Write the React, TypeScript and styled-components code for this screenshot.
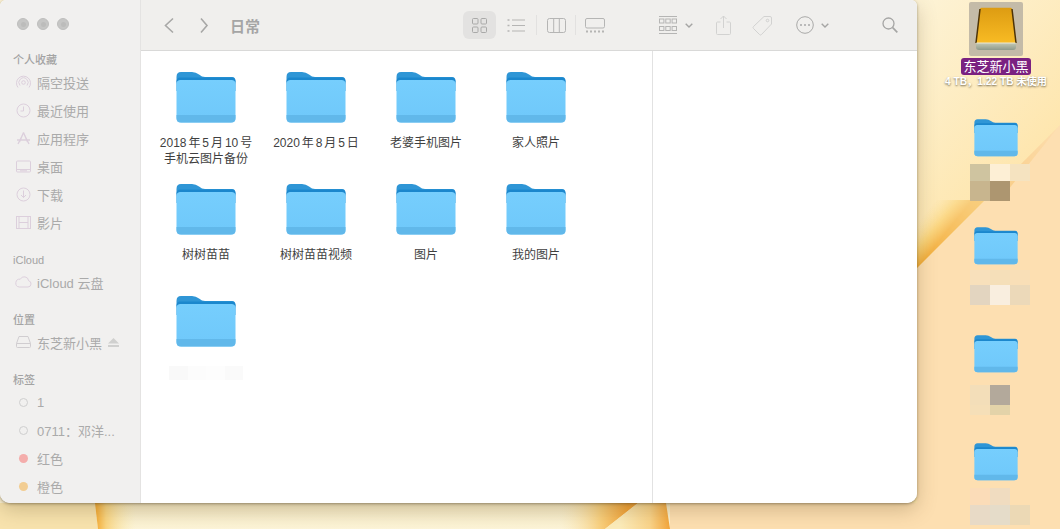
import React from 'react';
import styled, { createGlobalStyle } from 'styled-components';

const Global = createGlobalStyle`
  html, body { margin: 0; padding: 0; width: 1060px; height: 529px; overflow: hidden; }
  body { font-family: "Liberation Sans", "Noto Sans CJK SC", sans-serif; }
`;

const Desktop = styled.div`
  position: relative; width: 1060px; height: 529px; overflow: hidden; display: flex; align-items: flex-start;
`;
const Wallpaper = styled.svg`
  position: absolute; inset: 0; width: 1060px; height: 529px;
`;
const Win = styled.div`
  position: relative; width: 917px; height: 503px; display: flex; flex: none; overflow: hidden;
  background: #fff; border-radius: 6px 6px 10px 10px;
  box-shadow: 0 7px 20px rgba(90, 70, 30, .26), 0 1px 3px rgba(60, 50, 30, .45);
`;
const Sidebar = styled.aside`
  width: 140px; flex: none; background: #f1f0ef; border-right: 1px solid #e4e3e2; display: flex; flex-direction: column;
  padding-top: 18px; box-sizing: content-box;
`;
const Lights = styled.div`
  display: flex; gap: 8px; padding-left: 17px; height: 12px; margin-bottom: 23px;
`;
const Light = styled.span`
  width: 12px; height: 12px; border-radius: 50%; background: #c6c6c5; border: 1px solid #bfbfbe; box-sizing: border-box;
  display: flex; align-items: center; justify-content: center;
  &::after { content: ""; width: 5px; height: 5px; border-radius: 50%; background: #bcbcbb; }
`;
const SectionHead = styled.div<{ $top: number }>`
  font-size: 11px; line-height: 14px; color: #a3a3a3; font-weight: 500; padding-left: 13px; margin-top: ${p => p.$top}px; margin-bottom: 1px; height: 14px;
`;
const NavItem = styled.div`
  height: 28px; display: flex; align-items: center; font-size: 13px; color: #aaaaaa; white-space: nowrap;
`;
const NavIcon = styled.span`
  width: 37px; flex: none; display: flex; justify-content: center; padding-left: 9px; box-sizing: border-box;
  svg { display: block; flex: none; }
`;
const Dot = styled.span<{ $c: string }>`
  width: 9px; height: 9px; border-radius: 50%; background: ${p => p.$c}; display: block; flex: none;
`;
const Ring = styled.span`
  width: 9px; height: 9px; border-radius: 50%; border: 1px solid #cfcfcf; box-sizing: border-box; display: block; flex: none;
`;
const Eject = styled.span`
  margin-left: 6px; display: flex;
`;
const Main = styled.main`
  flex: 1; min-width: 0; display: flex; flex-direction: column;
`;
const Toolbar = styled.header`
  height: 50px; flex: none; background: #f0efed; border-bottom: 1px solid #d9d9d8; display: flex; align-items: center; position: relative;
`;
const Tool = styled.span<{ $l: number }>`
  margin-left: ${p => p.$l}px; display: flex; flex: none; align-items: center; justify-content: center;
  svg { display: block; }
`;
const Selected = styled.span<{ $l: number }>`
  margin-left: ${p => p.$l}px; width: 33px; height: 28px; border-radius: 6px; background: #e3e2e1; display: flex; flex: none; align-items: center; justify-content: center;
  svg { display: block; }
`;
const Sep = styled.span<{ $l: number }>`
  margin-left: ${p => p.$l}px; width: 1px; height: 20px; background: #e2e1e0; flex: none;
`;
const Title = styled.span`
  margin-left: 21px; width: 46px; font-size: 15px; font-weight: 700; color: #a5a5a5; flex: none; letter-spacing: 0;
`;
const Body = styled.div`
  flex: 1; min-height: 0; display: flex;
`;
const Files = styled.div`
  width: 511px; flex: none; display: grid; grid-template-columns: repeat(4, 110px); grid-auto-rows: 112px; padding: 20px 0 0 10px; box-sizing: border-box; align-content: start;
`;
const FileItem = styled.div`
  display: flex; flex-direction: column; align-items: center;
`;
const FileIcon = styled.div`
  height: 52px; margin-bottom: 12px; svg { display: block; }
`;
const FileLabel = styled.div`
  width: 106px; text-align: center; font-size: 12px; line-height: 16px; color: #3f3f3f; word-spacing: -1.4px;
`;
const BlurLabel = styled.div`
  width: 74px; height: 14px; margin-top: 7px; display: flex; filter: blur(.5px);
`;
const BlurCell = styled.span<{ $c: string }>`
  flex: 1; background: ${p => p.$c};
`;
const Preview = styled.div`
  flex: 1; border-left: 1px solid #e2e2e2; background: #fff;
`;
const IconColumn = styled.section`
  position: relative; width: 128px; margin-left: 15px; flex: none; display: flex; flex-direction: column; align-items: center;
`;
const DriveBox = styled.div`
  margin-top: 2px; width: 54px; height: 54px; background: #c4bba8; border-radius: 2px; display: flex; align-items: center; justify-content: center;
`;
const DriveName = styled.div`
  margin-top: 2px; height: 17px; line-height: 17px; padding: 0 2px; border-radius: 3px; background: #7a2181; color: #fff; font-size: 13px; white-space: nowrap;
`;
const DriveInfo = styled.div`
  height: 13px; line-height: 13px; margin-top: 0; margin-bottom: 30px; font-size: 10.2px; color: #fff; font-weight: 700; white-space: nowrap;
  text-shadow: 0 1px 2px rgba(70, 60, 40, .75);
`;
const DeskEntry = styled.div`
  height: 108px; display: flex; flex-direction: column; align-items: center; flex: none; width: 100%;
`;
const Mosaic = styled.div<{ $top: number }>`
  margin-top: ${p => p.$top}px; margin-left: 8px; display: grid; grid-template-columns: repeat(3, 20px);
  filter: blur(.4px);
`;
const Tile = styled.span<{ $c: string; $h: number }>`
  height: ${p => p.$h}px; background: ${p => p.$c};
`;

const Folder = ({ w = 60, h = 52 }: { w?: number; h?: number }) => (
  <svg width={w} height={h} viewBox="0 0 60 52">
    <defs>
      <linearGradient id="fb" x1="0" y1="0" x2="0" y2="1">
        <stop offset="0" stopColor="#76cefd" />
        <stop offset="1" stopColor="#6fc8fa" />
      </linearGradient>
    </defs>
    <path d="M.5 6 Q.5 1 5 1 H16 Q20 1 23 3.5 Q26 6 29 6 H56 Q59.5 6 59.5 10 V20 H.5 Z" fill="#2f96d6" />
    <path d="M.5 13 Q.5 9 4 9 H56 Q59.5 9 59.5 13 V47 Q59.5 51.5 55 51.5 H5 Q.5 51.5 .5 47 Z" fill="url(#fb)" />
    <path d="M.5 44 H59.5 V47 Q59.5 51.5 55 51.5 H5 Q.5 51.5 .5 47 Z" fill="#61b8ea" />
    <path d="M.5 11 Q.5 6.5 4 6.5 H56 Q59.5 6.5 59.5 11 V13 Q59.5 9 56 9 H4 Q.5 9 .5 13 Z" fill="#1b87cd" />
  </svg>
);

const NavA = { fill: 'none', stroke: '#dccfdc', strokeWidth: 1 } as const;

const AirDrop = () => (
  <svg width="15" height="15" viewBox="0 0 15 15" {...NavA}>
    <circle cx="7.5" cy="7.5" r="1.8" /><path d="M4 10.5a4.6 4.6 0 1 1 7 0M2 12.5a7 7 0 1 1 11 0" />
  </svg>
);
const Clock = () => (
  <svg width="15" height="15" viewBox="0 0 15 15" {...NavA}>
    <circle cx="7.5" cy="7.5" r="6.5" /><path d="M7.5 3.5v4.5h-3" />
  </svg>
);
const Apps = () => (
  <svg width="15" height="15" viewBox="0 0 15 15" {...NavA} strokeWidth={1.3}>
    <path d="M7.5 1.5 3.5 11M7.5 1.5 11.5 11M1 9h13M6 5l-4 8M9 5l4 8" />
  </svg>
);
const Screen = () => (
  <svg width="15" height="13" viewBox="0 0 15 13" {...NavA}>
    <rect x=".5" y="1" width="14" height="11" rx="1" /><path d="M.5 9.5h14M4 10.8h7" />
  </svg>
);
const Down = () => (
  <svg width="15" height="15" viewBox="0 0 15 15" {...NavA}>
    <circle cx="7.5" cy="7.5" r="6.5" /><path d="M7.5 3.5v7M5 8l2.5 2.5L10 8" />
  </svg>
);
const Film = () => (
  <svg width="15" height="13" viewBox="0 0 15 13" {...NavA}>
    <rect x=".5" y=".5" width="14" height="12" /><path d="M3 .5v12M12 .5v12M3 6.5h9" />
  </svg>
);
const Cloud = () => (
  <svg width="17" height="12" viewBox="0 0 17 12" {...NavA}>
    <path d="M4.2 11h8.8a3.2 3.2 0 0 0 .6-6.3A4.4 4.4 0 0 0 5.3 3.2 3.9 3.9 0 0 0 4.2 11Z" />
  </svg>
);
const DriveSmall = () => (
  <svg width="15" height="12" viewBox="0 0 15 12" fill="none" stroke="#d0cdd0">
    <path d="M3 .5h9l2.5 7v3a1 1 0 0 1-1 1h-12a1 1 0 0 1-1-1v-3ZM.5 7.5h14" />
  </svg>
);

const C = '#b5b5b4';
const Back = () => <svg width="12" height="17" viewBox="0 0 12 17" fill="none" stroke="#a8a8a7" strokeWidth="1.6"><path d="M10 1.5 2.5 8.5 10 15.5" /></svg>;
const Fwd = () => <svg width="10" height="17" viewBox="0 0 10 17" fill="none" stroke="#a8a8a7" strokeWidth="1.6"><path d="M2 1.5 8 8.5 2 15.5" /></svg>;
const GridIc = () => (
  <svg width="15" height="15" viewBox="0 0 15 15" fill="none" stroke="#a9a9a8">
    <rect x=".5" y=".5" width="5.5" height="5.5" rx="1" /><rect x="9" y=".5" width="5.5" height="5.5" rx="1" />
    <rect x=".5" y="9" width="5.5" height="5.5" rx="1" /><rect x="9" y="9" width="5.5" height="5.5" rx="1" />
  </svg>
);
const ListIc = () => (
  <svg width="18" height="15" viewBox="0 0 18 15" fill="none" stroke={C} strokeWidth="1.1">
    <path d="M5 2h13M5 7.5h13M5 13h13" /><path d="M.5 2h2M.5 7.5h2M.5 13h2" strokeWidth="1.6" />
  </svg>
);
const ColsIc = () => (
  <svg width="19" height="15" viewBox="0 0 19 15" fill="none" stroke={C}>
    <rect x=".5" y=".5" width="18" height="14" rx="2" /><path d="M6.7.5v14M12.3.5v14" />
  </svg>
);
const GalleryIc = () => (
  <svg width="20" height="15" viewBox="0 0 20 15" fill="none" stroke={C}>
    <rect x=".5" y=".5" width="19" height="9.5" rx="1.5" />
    <path d="M1 13.5h2M5 13.5h2M9 13.5h2M13 13.5h2M17 13.5h2" strokeWidth="2" />
  </svg>
);
const GroupIc = () => (
  <svg width="18" height="18" viewBox="0 0 18 18" fill="none" stroke={C}>
    <path d="M0 .5h18M0 17.5h18" />
    <rect x=".5" y="3" width="4.4" height="4" /><rect x="6.8" y="3" width="4.4" height="4" /><rect x="13.1" y="3" width="4.4" height="4" />
    <rect x=".5" y="10.5" width="4.4" height="4" /><rect x="6.8" y="10.5" width="4.4" height="4" /><rect x="13.1" y="10.5" width="4.4" height="4" />
  </svg>
);
const Caret = () => <svg width="8" height="5" viewBox="0 0 8 5" fill="none" stroke="#a5a5a4" strokeWidth="1.4"><path d="M.7.7 4 4 7.3.7" /></svg>;
const Share = () => (
  <svg width="15" height="20" viewBox="0 0 15 20" fill="none" stroke="#d2d2d1">
    <path d="M4.5 7H1.5a1 1 0 0 0-1 1v10.5a1 1 0 0 0 1 1h12a1 1 0 0 0 1-1V8a1 1 0 0 0-1-1h-3M7.5 13V1M4.5 4l3-3 3 3" />
  </svg>
);
const Tag = () => (
  <svg width="21" height="21" viewBox="0 0 21 21" fill="none" stroke="#d2d2d1">
    <path d="M12 1.5h6a1.5 1.5 0 0 1 1.5 1.5v6L9.5 19.5a1.4 1.4 0 0 1-2 0l-6-6a1.4 1.4 0 0 1 0-2Z" /><circle cx="15.5" cy="5.5" r="1.3" />
  </svg>
);
const More = () => (
  <svg width="18" height="18" viewBox="0 0 18 18" fill="none" stroke="#a9a9a8">
    <circle cx="9" cy="9" r="8.3" />
    <g fill="#a9a9a8" stroke="none"><circle cx="5" cy="9" r="1" /><circle cx="9" cy="9" r="1" /><circle cx="13" cy="9" r="1" /></g>
  </svg>
);
const Search = () => (
  <svg width="16" height="16" viewBox="0 0 16 16" fill="none" stroke="#a5a5a4" strokeWidth="1.3">
    <circle cx="6.5" cy="6.5" r="5.5" /><path d="m10.7 10.7 4.6 4.6" strokeWidth="1.7" />
  </svg>
);

const Drive = () => (
  <svg width="44" height="44" viewBox="0 0 44 44">
    <defs>
      <linearGradient id="dg" x1="0" y1="0" x2="0" y2="1">
        <stop offset="0" stopColor="#dd9c12" /><stop offset="1" stopColor="#f8bb24" />
      </linearGradient>
      <linearGradient id="db" x1="0" y1="0" x2="0" y2="1">
        <stop offset="0" stopColor="#c3c8b4" /><stop offset="1" stopColor="#8f9a8a" />
      </linearGradient>
    </defs>
    <path d="M6 2 Q6.3 .8 7.5 .8 H36.5 Q37.7 .8 38 2 L42 36 H2 Z" fill="url(#dg)" />
    <path d="M6 2 L2 36 M38 2 L42 36" stroke="#4d3306" strokeWidth="1.5" fill="none" />
    <path d="M2 36 H42 V40 Q42 43 39 43 H5 Q2 43 2 40 Z" fill="url(#db)" />
    <path d="M2.5 36 H41.5" stroke="#ece8d2" strokeWidth="1" />
  </svg>
);

const files = ['2018 年 5 月 10 号\n手机云图片备份', '2020 年 8 月 5 日', '老婆手机图片', '家人照片', '树树苗苗', '树树苗苗视频', '图片', '我的图片'];

type T = [string, number];
const mosaics: { top: number; tiles: T[] }[] = [
  { top: 7, tiles: [['#cfc4a0', 17], ['#fdefd5', 17], ['#f5e3c0', 17], ['#c8b58e', 20], ['#ad9670', 20], ['transparent', 20]] },
  { top: 5, tiles: [['#f8e0bb', 15], ['#f5dfb9', 15], ['#f9dfb7', 15], ['#e3d5c0', 20], ['#f9eedf', 20], ['#ecd9b9', 20]] },
  { top: 12, tiles: [['#f3deb9', 20], ['#b3a99b', 20], ['transparent', 20], ['#f5dfb8', 10], ['#e3d3a9', 10], ['transparent', 10]] },
  { top: 7, tiles: [['#fbdcb8', 17], ['#f0dcc0', 17], ['transparent', 17], ['#e8dac6', 20], ['#e5dcc9', 20], ['#ecd9b5', 20]] },
];

export default function App() {
  return (
    <Desktop>
      <Global />
      <Wallpaper viewBox="0 0 1060 529">
        <defs>
          <linearGradient id="w1" x1="917" y1="0" x2="1060" y2="130" gradientUnits="userSpaceOnUse">
            <stop offset="0" stopColor="#fdf3d6" /><stop offset="1" stopColor="#fee6ae" />
          </linearGradient>
          <linearGradient id="w2" x1="895" y1="250" x2="917" y2="268" gradientUnits="userSpaceOnUse">
            <stop offset="0" stopColor="#fde29a" stopOpacity="0" /><stop offset=".6" stopColor="#f9cf6e" /><stop offset="1" stopColor="#f2ab36" />
          </linearGradient>
          <linearGradient id="wm" x1="917" y1="268" x2="1060" y2="125" gradientUnits="userSpaceOnUse">
            <stop offset="0" stopColor="#fff" /><stop offset=".4" stopColor="#777" /><stop offset="1" stopColor="#000" />
          </linearGradient>
          <mask id="wmask" maskUnits="userSpaceOnUse" x="900" y="100" width="160" height="180">
            <rect x="900" y="100" width="160" height="180" fill="url(#wm)" />
          </mask>
          <linearGradient id="w3" x1="0" y1="503" x2="0" y2="529" gradientUnits="userSpaceOnUse">
            <stop offset="0" stopColor="#f6e9c4" /><stop offset="1" stopColor="#fdf5d8" />
          </linearGradient>
          <linearGradient id="w4" x1="96" y1="0" x2="136" y2="0" gradientUnits="userSpaceOnUse">
            <stop offset="0" stopColor="#f5ad38" /><stop offset=".25" stopColor="#fad581" /><stop offset="1" stopColor="#fbeeb8" stopOpacity="0" />
          </linearGradient>
          <linearGradient id="w6" x1="560" y1="0" x2="628" y2="0" gradientUnits="userSpaceOnUse">
            <stop offset="0" stopColor="#fbe9b8" stopOpacity="0" /><stop offset=".6" stopColor="#f9cf7c" /><stop offset="1" stopColor="#f2a236" />
          </linearGradient>
          <linearGradient id="w7" x1="620" y1="0" x2="670" y2="0" gradientUnits="userSpaceOnUse">
            <stop offset="0" stopColor="#fcecbb" /><stop offset=".6" stopColor="#fad48a" /><stop offset="1" stopColor="#f3a53a" />
          </linearGradient>
        </defs>
        <rect width="1060" height="529" fill="#fddfb1" />
        <path d="M0 0H1060V125L917 268V503H0Z" fill="url(#w1)" />
        <path d="M1060 125 917 268H880V200H1000Z" fill="url(#w2)" mask="url(#wmask)" />
        <path d="M0 503H670V529H0Z" fill="url(#w3)" />
        <path d="M0 503H95L98 529H0Z" fill="#f8e3ae" />
        <path d="M95 503H136V529H98Z" fill="url(#w4)" />
        <path d="M560 503H638L605 529H560Z" fill="url(#w6)" />
        <path d="M638 503H666L670 529H605Z" fill="url(#w7)" />
      </Wallpaper>
      <Win>
        <Sidebar>
          <Lights><Light /><Light /><Light /></Lights>
          <SectionHead $top={0}>个人收藏</SectionHead>
          <NavItem><NavIcon><AirDrop /></NavIcon>隔空投送</NavItem>
          <NavItem><NavIcon><Clock /></NavIcon>最近使用</NavItem>
          <NavItem><NavIcon><Apps /></NavIcon>应用程序</NavItem>
          <NavItem><NavIcon><Screen /></NavIcon>桌面</NavItem>
          <NavItem><NavIcon><Down /></NavIcon>下载</NavItem>
          <NavItem><NavIcon><Film /></NavIcon>影片</NavItem>
          <SectionHead $top={17}>iCloud</SectionHead>
          <NavItem><NavIcon><Cloud /></NavIcon>iCloud 云盘</NavItem>
          <SectionHead $top={17}>位置</SectionHead>
          <NavItem><NavIcon><DriveSmall /></NavIcon>东芝新小黑<Eject><svg width="11" height="9" viewBox="0 0 11 9" fill="#d0d0cf"><path d="M5.5 0 11 5.5H0ZM0 7h11v2H0Z" /></svg></Eject></NavItem>
          <SectionHead $top={17}>标签</SectionHead>
          <NavItem><NavIcon><Ring /></NavIcon>1</NavItem>
          <NavItem><NavIcon><Ring /></NavIcon>0711：邓洋...</NavItem>
          <NavItem><NavIcon><Dot $c="#f4adab" /></NavIcon>红色</NavItem>
          <NavItem><NavIcon><Dot $c="#f2cd92" /></NavIcon>橙色</NavItem>
        </Sidebar>
        <Main>
          <Toolbar>
            <Tool $l={22}><Back /></Tool>
            <Tool $l={24}><Fwd /></Tool>
            <Title>日常</Title>
            <Selected $l={187}><GridIc /></Selected>
            <Tool $l={11}><ListIc /></Tool>
            <Sep $l={11} />
            <Tool $l={10}><ColsIc /></Tool>
            <Sep $l={9} />
            <Tool $l={9}><GalleryIc /></Tool>
            <Tool $l={54}><GroupIc /></Tool>
            <Tool $l={8}><Caret /></Tool>
            <Tool $l={23}><Share /></Tool>
            <Tool $l={21}><Tag /></Tool>
            <Tool $l={23}><More /></Tool>
            <Tool $l={7}><Caret /></Tool>
            <Tool $l={53}><Search /></Tool>
          </Toolbar>
          <Body>
            <Files>
              {files.map(f => (
                <FileItem key={f}>
                  <FileIcon><Folder /></FileIcon>
                  <FileLabel>{f.split('\n').map(l => <div key={l}>{l}</div>)}</FileLabel>
                </FileItem>
              ))}
              <FileItem>
                <FileIcon><Folder /></FileIcon>
                <BlurLabel>
                  <BlurCell $c="#f9f9f9" /><BlurCell $c="#fcfcfc" /><BlurCell $c="#fdfdfd" /><BlurCell $c="#fafafa" />
                </BlurLabel>
              </FileItem>
            </Files>
            <Preview />
          </Body>
        </Main>
      </Win>
      <IconColumn>
        <DriveBox><Drive /></DriveBox>
        <DriveName>东芝新小黑</DriveName>
        <DriveInfo>4 TB，1.22 TB 未使用</DriveInfo>
        {mosaics.map((m, i) => (
          <DeskEntry key={i}>
            <Folder w={44} h={39} />
            <Mosaic $top={m.top}>
              {m.tiles.map(([c, h], j) => <Tile key={j} $c={c} $h={h} />)}
            </Mosaic>
          </DeskEntry>
        ))}
      </IconColumn>
    </Desktop>
  );
}
